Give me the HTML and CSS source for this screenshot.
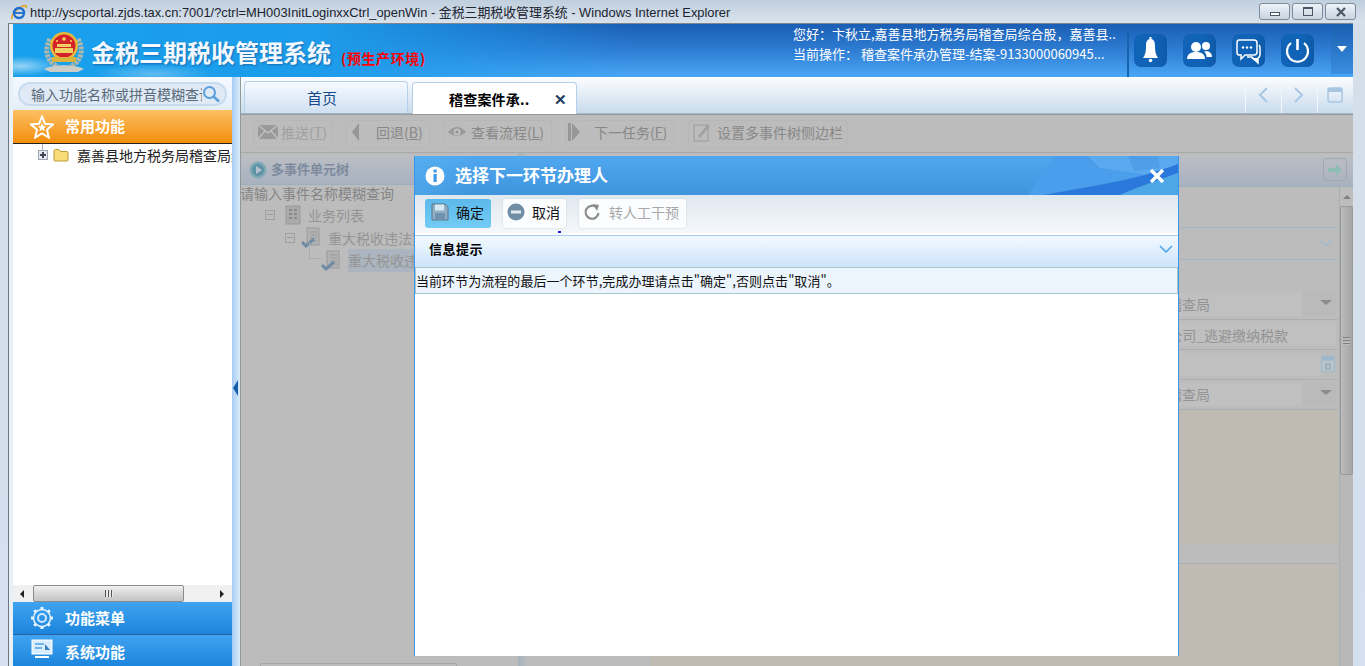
FILE: index.html
```html
<!DOCTYPE html>
<html lang="zh-CN">
<head>
<meta charset="utf-8">
<title>金税三期税收管理系统</title>
<link rel="stylesheet" href="styles.css">
</head>
<body>
<div class="titlebar">
  <svg class="ie" viewBox="0 0 16 16" width="16" height="16"><path d="M1 15 C0 12 4 5 12 2 C15 1 16 2 15 4" fill="none" stroke="#e8a020" stroke-width="1.6"/><circle cx="8" cy="9" r="5" fill="none" stroke="#1f6fd0" stroke-width="2.4"/><path d="M4 9 H12" stroke="#1f6fd0" stroke-width="1.8"/></svg>
  <span class="title-text">http://yscportal.zjds.tax.cn:7001/?ctrl=MH003InitLoginxxCtrl_openWin - 金税三期税收管理系统 - Windows Internet Explorer</span>
  <div class="win-btns">
    <span class="win-btn"><i class="g-min"></i></span>
    <span class="win-btn"><i class="g-max"></i></span>
    <span class="win-btn"><svg viewBox="0 0 12 10" width="12" height="10"><path d="M2 1 L10 9 M10 1 L2 9" stroke="#4a5666" stroke-width="2.2"/></svg></span>
  </div>
</div>
<div class="frame">
  <header class="header">
    <svg class="emblem" viewBox="0 0 44 42" width="44" height="42">
      <path d="M8 8 C2 18 4 30 16 36 M36 8 C42 18 40 30 28 36" fill="none" stroke="#aeb8ae" stroke-width="5" stroke-dasharray="3 1"/>
      <path d="M2 38 C12 33 32 33 42 38 L36 41 H8 Z" fill="#c9cfc8"/>
      <circle cx="22" cy="15" r="14" fill="#e8b93a"/>
      <circle cx="22" cy="15" r="11.5" fill="#d5232a"/>
      <rect x="13" y="17" width="18" height="5" fill="#f0d060"/>
      <rect x="15" y="13" width="14" height="3" fill="#f0d060"/>
      <circle cx="22" cy="8" r="1.8" fill="#f6dc60"/><circle cx="15" cy="10" r="1" fill="#f6dc60"/><circle cx="29" cy="10" r="1" fill="#f6dc60"/>
      <rect x="10" y="26" width="24" height="5" fill="#d9b33c"/>
    </svg>
    <h1 class="brand">金税三期税收管理系统</h1>
    <span class="env">(预生产环境)</span>
    <div class="user-info">
      <p>您好：卞秋立,嘉善县地方税务局稽查局综合股，嘉善县..</p>
      <p>当前操作： 稽查案件承办管理-结案-9133000060945...</p>
    </div>
    <div class="head-icons">
      <span class="head-icon"><svg viewBox="0 0 33 33" width="33" height="33"><path d="M16.5 5 C13 5 12 8 12 12 C12 18 11 21 9 24 H24 C22 21 21 18 21 12 C21 8 20 5 16.5 5 Z" fill="#fff"/><rect x="15.5" y="3" width="2" height="3" fill="#fff"/><circle cx="16.5" cy="26.5" r="1.8" fill="#fff"/></svg></span>
      <span class="head-icon"><svg viewBox="0 0 33 33" width="33" height="33"><circle cx="13" cy="13" r="5" fill="#fff"/><path d="M4 25 C4 19 9 18 13 18 C17 18 22 19 22 25 Z" fill="#fff"/><circle cx="23" cy="12" r="4" fill="#fff"/><path d="M21 17.500 C25 16.500 29 18 29 23 H23.500 C23.500 20.500 22.500 18.500 21 17.500 Z" fill="#fff"/></svg></span>
      <span class="head-icon"><svg viewBox="0 0 33 33" width="33" height="33"><path d="M7 6 H22 Q25 6 25 9 V18 Q25 21 22 21 H13 L9 25 V21 H7 Q5 21 5 18 V9 Q5 6 7 6 Z" fill="none" stroke="#fff" stroke-width="1.5"/><circle cx="11" cy="13.500" r="1.200" fill="#fff"/><circle cx="15" cy="13.500" r="1.200" fill="#fff"/><circle cx="19" cy="13.500" r="1.200" fill="#fff"/><path d="M27 11 Q28 12 28 14 V21 Q28 23 26 24 V29 L20 23 H15" fill="none" stroke="#fff" stroke-width="1.500"/><path d="M19 24 L26 24 V29 Z" fill="#fff"/></svg></span>
      <span class="head-icon"><svg viewBox="0 0 33 33" width="33" height="33"><path d="M10 9 A10.500 10.500 0 1 0 23 9" fill="none" stroke="#fff" stroke-width="2.200"/><rect x="15.200" y="5" width="2.600" height="11" fill="#fff"/></svg></span>
    </div>
    <div class="head-drop"><i></i></div>
  </header>
  <div class="main">
    <aside class="sidebar">
      <div class="search-row">
        <div class="search"><span class="search-text">输入功能名称或拼音模糊查询</span>
          <svg viewBox="0 0 18 18" width="18" height="18"><circle cx="7.500" cy="7.500" r="5.500" fill="none" stroke="#5a9ede" stroke-width="2"/><path d="M11.500 11.500 L17 16.500" stroke="#5a9ede" stroke-width="2.600"/></svg>
        </div>
      </div>
      <div class="nav nav-orange">
        <svg viewBox="0 0 24 24" width="24" height="24"><path d="M12 1.500 L15 8.800 L23 9.500 L17 14.700 L18.800 22.500 L12 18.400 L5.200 22.500 L7 14.700 L1 9.500 L9 8.800 Z" fill="none" stroke="#fff" stroke-width="2"/><path d="M12 8 L13.200 11 L16.200 11.200 L13.900 13.200 L14.600 16.200 L12 14.600 L9.400 16.200 L10.100 13.200 L7.800 11.200 L10.800 11 Z" fill="#fff"/></svg>
        <span>常用功能</span>
      </div>
      <div class="tree">
        <div class="tree-row">
          <i class="plus"></i>
          <svg viewBox="0 0 16 14" width="16" height="14"><path d="M1 3 Q1 1.500 2.500 1.500 H6 L7.500 3.500 H14 Q15 3.500 15 5 V12 Q15 13 14 13 H2 Q1 13 1 12 Z" fill="#f7dc78" stroke="#bd9a3a"/></svg>
          <span class="tree-text">嘉善县地方税务局稽查局综合股</span>
        </div>
      </div>
      <div class="hscroll">
        <i class="arrow-l"></i>
        <div class="hthumb"><i></i></div>
        <i class="arrow-r"></i>
      </div>
      <div class="nav nav-blue">
        <svg viewBox="0 0 24 24" width="24" height="24"><circle cx="12" cy="12" r="4" fill="none" stroke="#cfe8ff" stroke-width="2"/><circle cx="12" cy="12" r="8.500" fill="none" stroke="#e8f4ff" stroke-width="1.500"/><path d="M12 1 V4 M12 20 V23 M1 12 H4 M20 12 H23 M4.200 4.200 L6.300 6.300 M17.700 17.700 L19.800 19.800 M4.200 19.800 L6.300 17.700 M17.700 6.300 L19.800 4.200" stroke="#e8f4ff" stroke-width="3"/></svg>
        <span>功能菜单</span>
      </div>
      <div class="nav nav-blue nav-last">
        <svg viewBox="0 0 24 24" width="24" height="24"><rect x="2" y="3" width="20" height="14" fill="#d8eeff" stroke="#fff"/><rect x="5" y="6" width="9" height="2" fill="#6fb4ea"/><rect x="5" y="10" width="7" height="2" fill="#6fb4ea"/><path d="M15 7 L20 13 H15 Z" fill="#3a7fc0"/><rect x="5" y="19" width="14" height="2" fill="#fff"/></svg>
        <span>系统功能</span>
      </div>
    </aside>
    <div class="splitter"><i class="split-handle"></i></div>
    <section class="work">
      <div class="tabs">
        <div class="tab tab-home">首页</div>
        <div class="tab tab-active"><span>稽查案件承..</span><b>✕</b></div>
        <div class="tab-tools">
          <span class="tab-tool"><svg viewBox="0 0 12 18" width="12" height="18"><path d="M10 2 L3 9 L10 16" fill="none" stroke="#a8c6e4" stroke-width="2"/></svg></span>
          <span class="tab-tool"><svg viewBox="0 0 12 18" width="12" height="18"><path d="M2 2 L9 9 L2 16" fill="none" stroke="#a8c6e4" stroke-width="2"/></svg></span>
          <span class="tab-tool"><svg viewBox="0 0 16 16" width="16" height="16"><rect x="1" y="1" width="14" height="14" rx="2" fill="none" stroke="#a8c6e4" stroke-width="1.500"/><rect x="1" y="1" width="14" height="4" fill="#a8c6e4"/></svg></span>
        </div>
      </div>
      <div class="toolbar">
        <div class="tb-btn tb-1"><svg viewBox="0 0 20 14" width="20" height="14"><rect width="20" height="14" fill="#9a9a9a"/><path d="M0 0 L10 8 L20 0 M0 14 L7 6 M20 14 L13 6" fill="none" stroke="#c4c4c4" stroke-width="1.200"/></svg><span class="dim">推送(<u>T</u>)</span></div>
        <div class="tb-btn tb-2"><svg viewBox="0 0 10 18" width="10" height="18"><path d="M8 0 V18 L1 9 Z" fill="#979797"/></svg><span>回退(<u>B</u>)</span></div>
        <div class="tb-btn tb-3"><svg viewBox="0 0 20 14" width="20" height="14"><path d="M1 7 Q10 -3 19 7 Q10 15 1 7 Z" fill="#9a9a9a"/><circle cx="10" cy="7" r="3.500" fill="#c0c0c0"/><circle cx="10" cy="7" r="1.600" fill="#909090"/></svg><span>查看流程(<u>L</u>)</span></div>
        <div class="tb-btn tb-4"><svg viewBox="0 0 14 18" width="14" height="18"><rect width="3" height="18" fill="#979797"/><path d="M4 0 L12 9 L4 18 Z" fill="#979797"/></svg><span>下一任务(<u>F</u>)</span></div>
        <div class="tb-btn tb-5"><svg viewBox="0 0 18 20" width="18" height="20"><rect x="1" y="3" width="14" height="16" fill="none" stroke="#9a9a9a"/><path d="M5 14 L15 2 L17 4 L7 16 Z" fill="#a2a2a2"/></svg><span>设置多事件树侧边栏</span></div>
      </div>
      <div class="panes">
        <div class="left-pane">
          <div class="pane-head">
            <svg viewBox="0 0 18 18" width="18" height="18"><circle cx="9" cy="9" r="8.500" fill="#7faab5"/><circle cx="9" cy="9" r="6" fill="#5e92a6"/><path d="M7 5 L13 9 L7 13 Z" fill="#b6c2cc"/></svg>
            <span>多事件单元树</span>
          </div>
          <div class="tree-search">请输入事件名称模糊查询</div>
          <div class="dim-row dim-row-1"><i class="minus"></i><svg viewBox="0 0 16 20" width="16" height="20"><rect x="1" y="1" width="14" height="18" fill="#ababab" stroke="#999"/><path d="M4 5 H7 M9 5 H12 M4 9 H7 M9 9 H12 M4 13 H7 M9 13 H12" stroke="#888" stroke-width="2"/></svg><span>业务列表</span></div>
          <div class="dim-row dim-row-2"><i class="minus"></i><svg viewBox="0 0 20 22" width="20" height="22"><rect x="6" y="1" width="12" height="17" fill="#b2b2b2" stroke="#999"/><path d="M9 5 H16 M9 8 H16 M9 11 H16 M9 14 H16" stroke="#999"/><path d="M1 15 L5 19 L13 12" fill="none" stroke="#6f8ba4" stroke-width="3"/></svg><span>重大税收违法案件</span></div>
          <div class="dim-row dim-row-3"><svg viewBox="0 0 20 22" width="20" height="22"><rect x="6" y="1" width="12" height="17" fill="#b2b2b2" stroke="#999"/><path d="M9 5 H16 M9 8 H16 M9 11 H16 M9 14 H16" stroke="#999"/><path d="M1 15 L5 19 L13 12" fill="none" stroke="#6f8ba4" stroke-width="3"/></svg><span class="sel">重大税收违法案件</span></div>
          <div class="left-foot"></div>
        </div>
        <div class="band"></div>
        <div class="right-pane">
          <div class="pane-head pane-head-r">
            <span class="go-btn"><svg viewBox="0 0 16 12" width="16" height="12"><path d="M1 4 H9 V0 L15 6 L9 12 V8 H1 Z" fill="#8fbcb4"/></svg></span>
          </div>
          <div class="right-body">
            <div class="form-scroll">
              <div class="sec-gap"></div>
              <div class="sec-head"><svg viewBox="0 0 12 8" width="12" height="8"><path d="M1 1 L6 6 L11 1" fill="none" stroke="#9dbcd4" stroke-width="1.500"/></svg></div>
              <div class="sec-gap2"></div>
              <div class="form-row"><div class="field field-sel"><span>国家税务局稽查局</span><i class="sel-arrow"></i></div></div>
              <div class="form-row"><div class="field field-name">某某有限公司_逃避缴纳税款</div></div>
              <div class="form-row"><div class="field field-date"></div><svg class="cal" viewBox="0 0 14 16" width="14" height="16"><rect x=".5" y=".5" width="13" height="15" rx="1" fill="#b9c4cc" stroke="#9db8cc"/><rect x=".5" y=".5" width="13" height="4" fill="#9db8cc"/><rect x="5" y="8" width="4" height="5" fill="none" stroke="#8aa0b0"/></svg></div>
              <div class="form-row"><div class="field field-sel"><span>国家税务局稽查局</span><i class="sel-arrow"></i></div></div>
              <div class="beige b1"></div>
              <div class="gap-row"></div>
              <div class="bottom-row"><div class="side-cell"><i class="resize"></i></div><div class="beige b2"></div></div>
            </div>
            <div class="vscroll"><div class="vup"><i></i></div><div class="vthumb"><i></i></div></div>
          </div>
        </div>
      </div>
    </section>
  </div>
</div>
<div class="modal">
  <div class="modal-title">
    <svg class="swoosh" viewBox="0 0 150 39" width="150" height="39"><path d="M26 0 H150 V9 C110 22 60 30 16 39 H0 Z" fill="#4a9eec"/><path d="M60 0 L72 12 L118 19 L150 8 V0 Z" fill="#5aa8ee"/><path d="M100 0 L106 15 L132 12 L130 0 Z" fill="#4f9fe8"/><path d="M16 39 C60 31 110 24 150 8 V17 C120 28 108 32 92 39 Z" fill="#2a78dc"/><path d="M92 39 C108 32 120 28 150 17 V39 Z" fill="#4da6e6"/></svg>
    <svg viewBox="0 0 20 20" width="20" height="20"><circle cx="10" cy="10" r="9.500" fill="#fff"/><rect x="8.500" y="8" width="3.200" height="8" fill="#3f98e4"/><rect x="8.500" y="3.500" width="3.200" height="3" fill="#3f98e4"/></svg>
    <span class="modal-name">选择下一环节办理人</span>
    <svg class="modal-x" viewBox="0 0 16 16" width="16" height="16"><path d="M2 2 L14 14 M14 2 L2 14" stroke="#fff" stroke-width="3.400"/></svg>
  </div>
  <div class="modal-tools">
    <div class="m-btn m-ok"><svg viewBox="0 0 18 18" width="18" height="18"><path d="M1 1 H14 L17 4 V17 H1 Z" fill="#8fb0c6" stroke="#5c7284"/><rect x="4" y="1.500" width="9" height="6" fill="#d6e8f2"/><rect x="4" y="10" width="10" height="7" fill="#6f93ad"/></svg><span>确定</span></div>
    <div class="m-btn m-cancel"><svg viewBox="0 0 18 18" width="18" height="18"><circle cx="9" cy="9" r="8.500" fill="#6f8ea6"/><rect x="4" y="7.500" width="10" height="3" fill="#e4eaee"/></svg><span>取消</span></div>
    <div class="m-btn m-off"><svg viewBox="0 0 18 18" width="18" height="18"><path d="M13.500 4.500 A6.500 6.500 0 1 0 15.500 10" fill="none" stroke="#8c8c8c" stroke-width="2.200"/><path d="M10 1 L16 2 L14 8 Z" fill="#8c8c8c"/></svg><span>转人工干预</span></div>
    <i class="dot"></i>
  </div>
  <div class="info-head"><b>信息提示</b><svg viewBox="0 0 14 8" width="14" height="8"><path d="M1 1 L7 7 L13 1" fill="none" stroke="#4aa3ea" stroke-width="1.500"/></svg></div>
  <div class="info-msg">当前环节为流程的最后一个环节,完成办理请点击"确定",否则点击"取消"。</div>
</div>
</body>
</html>
```

FILE: styles.css
```css
* { box-sizing: border-box; }
html, body { margin: 0; padding: 0; height: 666px; overflow: hidden; }
body { background: linear-gradient(#c2d0df, #d4dfea 23px, #d4e0ee); font-family: "Noto Sans CJK SC", "Liberation Sans", sans-serif; position: relative; }
p, h1 { margin: 0; }
i { display: block; }

.titlebar { height: 23px; display: flex; align-items: center; padding: 0 9px 0 11px; background: linear-gradient(#c0cfde, #d8e2ec); font-family: "Liberation Sans", "Noto Sans CJK SC", sans-serif; }
.ie { flex: none; }
.title-text { margin-left: 3px; font-size: 12.9px; color: #1c2430; white-space: nowrap; }
.win-btns { margin-left: auto; display: flex; gap: 2px; }
.win-btn { width: 31px; height: 17px; border: 1px solid #7c8a9a; border-radius: 3px; background: linear-gradient(#eef3f8, #c8d4e0); display: flex; align-items: center; justify-content: center; }
.g-min { width: 10px; height: 4px; border: 1px solid #4a5666; background: #fff; margin-top: 5px; }
.g-max { width: 10px; height: 9px; border: 1px solid #4a5666; border-top-width: 2px; }

.frame { height: 643px; margin-left: 8px; margin-right: 12px; padding-left: 4px; border-left: 1px solid #6e7680; border-top: 1px solid #7e858c; background: #e8f0f8; display: flex; flex-direction: column; }

.header { height: 53px; flex: none; display: flex; align-items: flex-start; background:
  radial-gradient(ellipse 38px 10px at 8px 42px, rgba(255,255,255,.55), transparent),
  radial-gradient(ellipse 60px 10px at 140px 50px, rgba(255,255,255,.3), transparent),
  linear-gradient(to right, #18a0ec 0, #1c9ceb 300px, rgba(30,120,215,0) 620px),
  linear-gradient(#1a5eb4, #2f7dd4 50%, #4ba7f6); }
.emblem { margin: 7px 0 0 29px; flex: none; }
.brand { margin: 11px 0 0 5px; font-size: 24px; line-height: 34px; font-weight: 700; color: #f2f8ff; text-shadow: 1px 1px 2px rgba(20,60,120,.5); white-space: nowrap; width: 250px; flex: none; }
.env { margin-top: 24px; width: 84px; flex: none; font-size: 14px; line-height: 20px; font-weight: 700; letter-spacing: .6px; color: #f00; white-space: nowrap; }
.user-info { margin-left: 368px; width: 334px; flex: none; color: #fff; font-size: 13px; line-height: 20px; white-space: nowrap; }
.head-icons { height: 53px; border-left: 2px solid #1763ad; padding: 10px 0 0 5px; display: flex; width: 204px; flex: none; }
.head-icon { width: 33px; height: 33px; border-radius: 7px; background: linear-gradient(to right, #1063b7 60%, #0e5aa8); margin-right: 16px; }
.head-drop { width: 22px; height: 50px; flex: none; background: linear-gradient(#1a5fb0, #3a8ee0); display: flex; align-items: center; justify-content: center; }
.head-drop i { border: 5px solid transparent; border-top: 6px solid #fff; border-bottom: 0; }

.main { flex: 1; display: flex; min-height: 0; }
.sidebar { width: 219px; flex: none; display: flex; flex-direction: column; background: #fff; }
.search-row { height: 33px; flex: none; padding: 5px 5px 0; background: linear-gradient(#f4f9ff, #e4eef9); }
.search { height: 24px; border: 2px solid #c8dcf0; border-radius: 12px; background: #dfeaf6; display: flex; align-items: center; padding: 0 5px 0 11px; }
.search-text { width: 171px; overflow: hidden; white-space: nowrap; font-size: 14px; color: #5a6a7a; flex: none; }
.nav { height: 33px; flex: none; display: flex; align-items: center; padding-left: 17px; color: #fff; font-size: 15px; font-weight: 700; }
.nav span { margin-left: 11px; margin-bottom: 2px; }
.nav-orange { background: linear-gradient(#fdbf63, #f28e0c); border-bottom: 1px solid #222; height: 34px; }
.nav-blue { background: linear-gradient(#3fa3f0, #1c85dc); border-bottom: 1px solid #2a5f9e; }
.nav-last { border-bottom: 0; height: 31px; align-items: flex-start; padding-top: 2px; flex: none; }
.nav-last span { margin-top: 4px; }
.tree { flex: 1; overflow: hidden; position: relative; }
.tree::before { content: ""; position: absolute; left: 29px; top: 0; width: 1px; height: 7px; background: #a8b0c0; }
.tree-row { display: flex; align-items: center; height: 24px; margin-top: -1px; padding-left: 25px; white-space: nowrap; }
.plus { width: 10px; height: 10px; border: 1px solid #9aa4b4; background: linear-gradient(#445, #445) center/2px 6px no-repeat, linear-gradient(#445, #445) center/6px 2px no-repeat, #e8eaf0; flex: none; }
.tree-row svg { margin-left: 5px; flex: none; }
.tree-text { margin-left: 8px; font-size: 14px; color: #222; }
.hscroll { height: 17px; flex: none; display: flex; align-items: center; background: #f0f0f0; padding: 0 8px 0 7px; }
.arrow-l { border: 4px solid transparent; border-right: 4px solid #222; border-left: 0; }
.arrow-r { border: 4px solid transparent; border-left: 4px solid #222; border-right: 0; margin-left: auto; }
.hthumb { width: 151px; height: 17px; margin-left: 9px; border: 1px solid #8c8c8c; border-radius: 2px; background: linear-gradient(#f0f0f0, #d8d8d8 50%, #c4c4c4); display: flex; align-items: center; justify-content: center; }
.hthumb i { width: 8px; height: 7px; background: repeating-linear-gradient(to right, #555 0 1px, #e8e8e8 1px 3px); }

.splitter { width: 9px; flex: none; position: relative; background: linear-gradient(to right, #a6ccf2, #dcebfa); border-right: 1px solid #8f9a9a; }
.split-handle { position: absolute; left: 1px; top: 303px; border: 8px solid transparent; border-right: 5px solid #155fa8; border-left: 0; }

.work { flex: 1; min-width: 0; display: flex; flex-direction: column; background: #bcbcbc; }
.tabs { height: 37px; flex: none; display: flex; align-items: flex-end; padding-left: 3px; background: linear-gradient(#fcfdff, #c9dbec); border-bottom: 1px solid #a4b6c8; }
.tab { height: 32px; width: 164px; border: 1px solid #b7d0e9; border-bottom: 0; border-radius: 4px 4px 0 0; display: flex; align-items: center; justify-content: center; font-size: 15px; }
.tab-home { color: #17498a; background: linear-gradient(#f6faff, #cfe0f1); padding-right: 8px; }
.tab-active { margin-left: 4px; width: 165px; background: #fff; justify-content: flex-start; padding-left: 36px; position: relative; top: 1px; }
.tab-active span { font-size: 14px; font-weight: 700; letter-spacing: .2px; color: #000; width: 84px; white-space: nowrap; }
.tab-active b { margin-left: 21px; font-size: 15px; color: #1c3a5e; }
.tab-tools { margin-left: auto; display: flex; height: 36px; }
.tab-tool { width: 36px; border-left: 1px solid #f0f6fc; display: flex; align-items: center; justify-content: center; padding-right: 2px; }

.toolbar { height: 39px; flex: none; display: flex; align-items: center; padding: 1px 0 0 12px; border-top: 1px solid #999; border-bottom: 1px solid #a8a8a8; font-size: 14px; color: #888; }
.tb-btn { height: 28px; border: 1px solid #b7b7b7; border-radius: 4px; display: flex; align-items: center; margin-right: 13px; white-space: nowrap; padding: 0 0 4px 4px; }
.tb-btn span { margin-left: 6px; }
.tb-btn .dim { color: #a0a0a0; }
.tb-1 { width: 80px; }
.tb-1 span { margin-left: 3px; }
.tb-2 { width: 84px; }
.tb-2 span { margin-left: 15px; }
.tb-3 { width: 109px; padding-left: 3px; }
.tb-3 span { margin-left: 4px; }
.tb-4 { width: 109px; margin-right: 14px; padding-left: 2px; }
.tb-4 span { margin-left: 12px; }
.tb-5 { width: 160px; }

.panes { flex: 1; min-height: 0; display: flex; }
.left-pane { width: 277px; flex: none; display: flex; flex-direction: column; padding-top: 2px; }
.pane-head { height: 30px; flex: none; display: flex; align-items: center; padding-left: 8px; background: linear-gradient(#bcbec3, #a8b2c0); border-bottom: 1px solid #9eaebe; font-size: 13px; font-weight: 700; color: #7d8a9e; }
.pane-head span { margin-left: 4px; margin-bottom: 2px; }
.tree-search { margin: -2px 0 0 -1px; font-size: 14px; line-height: 20px; color: #858585; white-space: nowrap; }
.dim-row { display: flex; align-items: center; height: 23px; font-size: 14px; color: #949494; white-space: nowrap; }
.dim-row-1 { padding-left: 24px; }
.dim-row-1 svg { margin-left: 10px; }
.dim-row-1 span { margin-left: 7px; }
.dim-row-2 { padding-left: 44px; }
.dim-row-2 svg { margin-left: 6px; }
.dim-row-2 span { margin-left: 7px; }
.dim-row-3 { padding-left: 80px; position: relative; }
.dim-row-3::before { content: ""; position: absolute; left: 68px; top: -7px; width: 12px; height: 16px; border-left: 1px solid #a8aeb6; border-bottom: 1px solid #a8aeb6; }
.dim-row-3 .sel { margin-left: 7px; background: #abb4bf; padding: 0 4px 0 0; line-height: 23px; }
.minus { width: 10px; height: 10px; border: 1px solid #a0a0a0; background: linear-gradient(#999, #999) center/6px 1px no-repeat; flex: none; }
.left-foot { margin: auto 0 0 19px; width: 197px; height: 3px; border: 1px solid #a6a6a6; border-bottom: 0; border-radius: 2px 2px 0 0; }
.band { width: 10px; flex: none; background: linear-gradient(to right, #a6b2be, #bcbcbc); }

.right-pane { flex: 1; min-width: 0; display: flex; flex-direction: column; padding-top: 2px; }
.pane-head-r { justify-content: flex-end; height: 32px; padding: 0 6px 0 0; }
.go-btn { width: 24px; height: 23px; margin: 0; border: 1px solid #a2a8ae; border-radius: 3px; display: flex; align-items: center; justify-content: center; }
.right-body { flex: 1; min-height: 0; display: flex; }
.form-scroll { flex: 1; min-width: 0; display: flex; flex-direction: column; padding-right: 1px; }
.sec-gap { height: 40px; flex: none; }
.sec-head { height: 33px; flex: none; border-top: 1px solid #a8b4be; border-bottom: 1px solid #a8b4be; display: flex; align-items: center; justify-content: flex-end; padding-right: 6px; }
.sec-gap2 { height: 30px; flex: none; }
.form-row { height: 30px; flex: none; display: flex; align-items: center; border-bottom: 1px solid #a8b0b0; padding-right: 2px; position: relative; }
.form-row .cal { position: absolute; right: 3px; top: 6px; }
.field { height: 23px; flex: 1; margin-left: 125px; background: #c0c0c0; font-size: 14px; line-height: 24px; color: #949494; text-align: right; white-space: nowrap; overflow: hidden; }
.field-sel { display: flex; justify-content: flex-end; align-items: center; padding-right: 4px; background: linear-gradient(to right, #c0c0c0 95%, #bababa 95%); }
.field-sel span { margin: 0 110px 2px 0; }
.sel-arrow { border: 6px solid transparent; border-top: 5px solid #8c8c8c; border-bottom: 0; margin-top: -4px; }
.field-name { padding-right: 48px; }
.field-date { margin-right: 15px; }
.beige { background: #bfbbb3; }
.b1 { height: 133px; flex: none; margin-left: 125px; }
.gap-row { height: 21px; flex: none; border-bottom: 1px solid #a8b0b8; }
.bottom-row { flex: 1; display: flex; min-height: 0; padding-top: 4px; }
.side-cell { width: 122px; flex: none; position: relative; }
.resize { position: absolute; right: 8px; top: 3px; width: 9px; height: 4px; border: 1px solid #7e7e7e; border-width: 0 1px; background: linear-gradient(#7e7e7e, #7e7e7e) center/100% 1px no-repeat; }
.b2 { flex: 1; margin-top: -4px; }
.vscroll { width: 14px; flex: none; background: #b8b8b8; border-left: 1px solid #a6b0b0; }
.vup { height: 19px; display: flex; align-items: center; justify-content: center; background: #bdbdbd; }
.vup i { border: 4px solid transparent; border-bottom: 4px solid #808080; border-top: 0; }
.vthumb { height: 269px; border: 1px solid #9a9a9a; border-radius: 2px; background: linear-gradient(to right, #bbb, #a6a6a6); display: flex; align-items: center; justify-content: center; }
.vthumb i { width: 7px; height: 8px; background: repeating-linear-gradient(#808080 0 1px, #bbb 1px 3px); }

.modal { position: absolute; left: 414px; top: 156px; width: 765px; height: 500px; background: #fff; border: 1px solid #3a96ea; border-top: 0; border-bottom: 0; display: flex; flex-direction: column; }
.modal-title { height: 39px; flex: none; display: flex; align-items: center; padding: 0 13px 0 10px; position: relative; background: linear-gradient(to right, rgba(90,180,240,.5), transparent 60px), linear-gradient(#50a8f0, #3f94dd); }
.swoosh { position: absolute; right: 0; top: 0; }
.modal-title > svg:not(.swoosh), .modal-name { position: relative; }
.modal-name { margin: 0 0 2px 10px; font-size: 17px; font-weight: 700; color: #fff; white-space: nowrap; }
.modal-x { margin-left: auto; }
.modal-tools { height: 40px; flex: none; display: flex; align-items: center; padding: 0 0 1px 10px; background: linear-gradient(#dfe8ef, #f5f8fb); border-bottom: 2px solid #fff; position: relative; font-size: 14px; }
.m-btn { height: 29px; display: flex; align-items: center; white-space: nowrap; border-radius: 3px; padding-bottom: 3px; }
.m-btn span { margin-left: 7px; }
.m-ok { width: 66px; padding-left: 6px; background: linear-gradient(#5bb8ea, #73cdf5); color: #111; }
.m-cancel { width: 63px; margin-left: 12px; padding-left: 4px; background: #fbfcfd; box-shadow: 0 0 2px #c8ccd0; color: #111; }
.m-off { width: 107px; margin-left: 13px; padding-left: 4px; background: #fbfcfd; box-shadow: 0 0 2px #c8ccd0; color: #a8a8a8; }
.m-off span { margin-left: 8px; }
.dot { position: absolute; left: 143px; bottom: 0; width: 3px; height: 2px; background: #1a1ae0; }
.info-head { height: 32px; flex: none; display: flex; align-items: center; justify-content: space-between; padding: 0 5px 6px 14px; border-top: 1px solid #a4cdf2; background: linear-gradient(#f2f9ff, #cde4fb); }
.info-head b { font-size: 13px; letter-spacing: .5px; color: #000; }
.info-msg { height: 27px; flex: none; padding-left: 0; border: 1px solid #a8c6cc; background: #ecf4fc; font-size: 13px; line-height: 25px; letter-spacing: .05px; color: #111; white-space: nowrap; }
```
